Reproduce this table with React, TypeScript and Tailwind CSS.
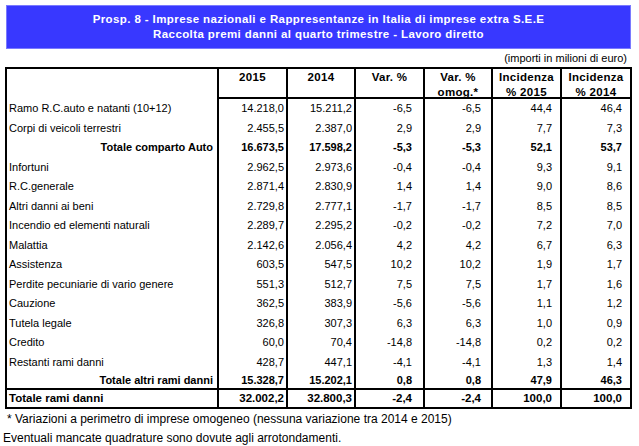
const rows: { label: string; v: string[]; kind?: 'sub' }[] = [
  { label: 'Ramo R.C.auto e natanti (10+12)', v: ['14.218,0', '15.211,2', '-6,5', '-6,5', '44,4', '46,4'] },
  { label: 'Corpi di veicoli terrestri', v: ['2.455,5', '2.387,0', '2,9', '2,9', '7,7', '7,3'] },
  { label: 'Totale comparto Auto', v: ['16.673,5', '17.598,2', '-5,3', '-5,3', '52,1', '53,7'], kind: 'sub' },
  { label: 'Infortuni', v: ['2.962,5', '2.973,6', '-0,4', '-0,4', '9,3', '9,1'] },
  { label: 'R.C.generale', v: ['2.871,4', '2.830,9', '1,4', '1,4', '9,0', '8,6'] },
  { label: 'Altri danni ai beni', v: ['2.729,8', '2.777,1', '-1,7', '-1,7', '8,5', '8,5'] },
  { label: 'Incendio ed elementi naturali', v: ['2.289,7', '2.295,2', '-0,2', '-0,2', '7,2', '7,0'] },
  { label: 'Malattia', v: ['2.142,6', '2.056,4', '4,2', '4,2', '6,7', '6,3'] },
  { label: 'Assistenza', v: ['603,5', '547,5', '10,2', '10,2', '1,9', '1,7'] },
  { label: 'Perdite pecuniarie di vario genere', v: ['551,3', '512,7', '7,5', '7,5', '1,7', '1,6'] },
  { label: 'Cauzione', v: ['362,5', '383,9', '-5,6', '-5,6', '1,1', '1,2'] },
  { label: 'Tutela legale', v: ['326,8', '307,3', '6,3', '6,3', '1,0', '0,9'] },
  { label: 'Credito', v: ['60,0', '70,4', '-14,8', '-14,8', '0,2', '0,2'] },
  { label: 'Restanti rami danni', v: ['428,7', '447,1', '-4,1', '-4,1', '1,3', '1,4'] },
  { label: 'Totale altri rami danni', v: ['15.328,7', '15.202,1', '0,8', '0,8', '47,9', '46,3'], kind: 'sub' },
]

const total = ['32.002,2', '32.800,3', '-2,4', '-2,4', '100,0', '100,0']

// widths incl. right divider, and right padding of the figures
const cols = [
  { w: 'w-[69px]', pr: 'pr-[2px]' },
  { w: 'w-[68px]', pr: 'pr-[2px]' },
  { w: 'w-[69px]', pr: 'pr-[11px]' },
  { w: 'w-[68px]', pr: 'pr-[10px]' },
  { w: 'w-[69px]', pr: 'pr-[8px]' },
  { w: 'w-[68px]', pr: 'pr-[8px]' },
]

const headers = [['2015'], ['2014'], ['Var. %'], ['Var. %', 'omog.*'], ['Incidenza', '% 2015'], ['Incidenza', '% 2014']]

function Row({ label, v, kind, last }: { label: string; v: string[]; kind?: 'sub'; last?: boolean }) {
  const bold = kind === 'sub'
  return (
    <div className={`flex ${last ? 'h-[16px]' : 'h-[19.5px]'} ${bold ? 'font-bold' : ''}`}>
      <div
        className={`w-[212px] shrink-0 border-r-2 border-black flex items-center ${
          bold ? 'justify-end pr-[4px]' : 'pl-[2px]'
        }`}
      >
        {label}
      </div>
      {v.map((x, i) => (
        <div
          key={i}
          className={`${cols[i].w} ${cols[i].pr} shrink-0 flex items-center justify-end ${
            i < 5 ? 'border-r-2 border-black' : ''
          }`}
        >
          {x}
        </div>
      ))}
    </div>
  )
}

export default function App() {
  return (
    <div className="w-[639px] h-[446px] bg-white text-black text-[11px] leading-none font-['Liberation_Sans',Arial,sans-serif] overflow-hidden">
      <div className="ml-[6px] mt-[5px] w-[625px] h-[44px] bg-[#3838ff] border border-[#7a7aff] flex flex-col items-center justify-center gap-[3px] text-white font-bold text-[11.5px] tracking-[0.4px]">
        <div>Prosp. 8 - Imprese nazionali e Rappresentanze in Italia di imprese extra S.E.E</div>
        <div>Raccolta premi danni al quarto trimestre - Lavoro diretto</div>
      </div>

      <div className="h-[18px] flex items-center justify-end pr-[12px]">(importi in milioni di euro)</div>

      <div className="ml-[5px] w-[627px] border-2 border-black">
        <div className="flex font-bold text-[11.5px] tracking-[0.3px]">
          <div className="w-[212px] shrink-0 border-r-2 border-black h-[30px]" />
          {headers.map((h, i) => (
            <div
              key={i}
              className={`${cols[i].w} shrink-0 h-[30px] border-b-2 border-black flex flex-col items-center pt-[3px] gap-[3px] ${
                i < 5 ? 'border-r-2' : ''
              }`}
            >
              {h.map((t) => (
                <div key={t}>{t}</div>
              ))}
            </div>
          ))}
        </div>

        {rows.map((r, i) => (
          <Row key={r.label} {...r} last={i === rows.length - 1} />
        ))}

        <div className="flex h-[19px] border-t-2 border-black font-bold text-[11.5px]">
          <div className="w-[212px] shrink-0 border-r-2 border-black flex items-center pl-[2px]">Totale rami danni</div>
          {total.map((x, i) => (
            <div
              key={i}
              className={`${cols[i].w} ${cols[i].pr} shrink-0 flex items-center justify-end ${
                i < 5 ? 'border-r-2 border-black' : ''
              }`}
            >
              {x}
            </div>
          ))}
        </div>
      </div>

      <div className="text-[12px]">
        <div className="ml-[7px] h-[19px] flex items-center">
          * Variazioni a perimetro di imprese omogeneo (nessuna variazione tra 2014 e 2015)
        </div>
        <div className="ml-[3px] h-[19px] flex items-center">Eventuali mancate quadrature sono dovute agli arrotondamenti.</div>
      </div>
    </div>
  )
}
